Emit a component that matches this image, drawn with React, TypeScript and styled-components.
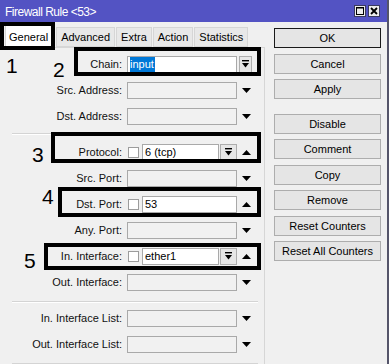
import React from "react";
import styled, { createGlobalStyle } from "styled-components";

const Global = createGlobalStyle`
  html, body { margin: 0; padding: 0; background: #f0f0f0; }
  body { font-family: "Liberation Sans", Arial, sans-serif; font-size: 11px; color: #000; }
  * { box-sizing: border-box; }
`;

const Window = styled.div`
  position: relative;
  width: 389px;
  height: 364px;
  overflow: hidden;
  background: #f0f0f0;
  display: flex;
  flex-direction: column;
  border-right: 2px solid #55556a;
`;

const TitleBar = styled.div`
  height: 22px;
  flex: none;
  background: #5353c3;
  color: #fff;
  display: flex;
  align-items: center;
  justify-content: space-between;
  padding: 0 7px 0 5px;
  font-size: 12px;
`;

const TitleText = styled.span`
  letter-spacing: -0.5px;
  padding-top: 1px;
`;

const TitleButtons = styled.div`
  display: flex;
  gap: 2px;
`;

const TitleBtn = styled.div`
  width: 12px;
  height: 12px;
  background: #ececec;
  border: 1px solid #3a3a60;
  display: flex;
  align-items: center;
  justify-content: center;
`;

const Body = styled.div`
  flex: 1;
  display: flex;
  min-height: 0;
`;

const LeftPane = styled.div`
  width: 265px;
  flex: none;
  display: flex;
  flex-direction: column;
`;

const TabStrip = styled.div`
  height: 25px;
  flex: none;
  display: flex;
  align-items: flex-end;
  padding-left: 5px;
`;

const Tab = styled.div<{ $active?: boolean }>`
  height: ${(p) => (p.$active ? 23 : 20)}px;
  padding: 0 ${(p) => (p.$active ? 3 : 4)}px;
  margin-bottom: ${(p) => (p.$active ? -1 : 0)}px;
  margin-right: ${(p) => (p.$active ? 4 : 1)}px;
  background: ${(p) => (p.$active ? "#ffffff" : "#e8e8e8")};
  border: 1px solid #d6d6d6;
  border-bottom: ${(p) => (p.$active ? "none" : "1px solid #d6d6d6")};
  display: flex;
  align-items: center;
  white-space: nowrap;
  position: relative;
  z-index: ${(p) => (p.$active ? 1 : 0)};
`;

const TabPanel = styled.div`
  flex: 1;
  border-top: 1px solid #d6d6d6;
  border-right: 1px solid #d6d6d6;
  display: flex;
  flex-direction: column;
`;

const Section = styled.div<{ $top: number; $bottom: number }>`
  padding: ${(p) => p.$top}px 0 ${(p) => p.$bottom}px;
  display: flex;
  flex-direction: column;
`;

const Separator = styled.div`
  margin: 0 6px 0 12px;
  border-top: 1px solid #d4d4d4;
  border-bottom: 1px solid #ffffff;
`;

const Row = styled.div`
  height: 26px;
  display: flex;
  align-items: center;
`;

const Label = styled.div`
  width: 122px;
  flex: none;
  text-align: right;
  white-space: nowrap;
  color: #111;
`;

const Field = styled.div`
  width: 110px;
  margin-left: 5px;
  flex: none;
  display: flex;
  align-items: center;
`;

const Check = styled.div`
  width: 11px;
  height: 11px;
  margin: 0 3px 0 1px;
  flex: none;
  background: #fff;
  border: 1px solid #9c9c9c;
`;

const TextBox = styled.div<{ $filled?: boolean }>`
  flex: 1;
  height: 17px;
  border: 1px solid #a9a9a9;
  background: ${(p) => (p.$filled ? "#ffffff" : "#f1f1f1")};
  padding-left: 2px;
  line-height: 15px;
  white-space: nowrap;
  overflow: hidden;
`;

const Selected = styled.span`
  background: #0078d7;
  color: #fff;
  padding: 0 1px 0 0;
  display: inline-block;
  height: 15px;
`;

const ComboBtn = styled.div<{ $w: number }>`
  width: ${(p) => p.$w}px;
  height: 17px;
  flex: none;
  margin-left: 1px;
  background: #e6e6e6;
  border: 1px solid #adadad;
  display: flex;
  align-items: center;
  justify-content: center;
`;

const Trail = styled.div`
  width: 16px;
  margin-left: 1px;
  flex: none;
  display: flex;
  align-items: center;
`;

const ArrowWrap = styled.div`
  margin-left: 4px;
  display: flex;
`;

const RightPane = styled.div`
  flex: 1;
  display: flex;
  flex-direction: column;
  padding: 6px 0 0 9px;
  gap: 5.5px;
`;

const Button = styled.div<{ $default?: boolean; $gapBefore?: boolean }>`
  width: 107px;
  height: 20px;
  flex: none;
  background: #e5e5e5;
  border: 1px solid ${(p) => (p.$default ? "#1a1a1a" : "#adadad")};
  display: flex;
  align-items: center;
  justify-content: center;
  white-space: nowrap;
  margin-top: ${(p) => (p.$gapBefore ? 9 : 0)}px;
`;

const Annot = styled.div<{ $x: number; $y: number; $w: number; $h: number }>`
  position: absolute;
  left: ${(p) => p.$x}px;
  top: ${(p) => p.$y}px;
  width: ${(p) => p.$w}px;
  height: ${(p) => p.$h}px;
  border: 4px solid #000;
  pointer-events: none;
  z-index: 5;
`;

const Num = styled.div<{ $x: number; $y: number }>`
  position: absolute;
  left: ${(p) => p.$x}px;
  top: ${(p) => p.$y}px;
  font-size: 21px;
  line-height: 21px;
  color: #000;
  z-index: 5;
`;

const ComboIcon = () => (
  <svg width="7" height="8" viewBox="0 0 7 8">
    <rect x="0" y="0" width="7" height="1.4" fill="#000" />
    <polygon points="0,3 7,3 3.5,7.5" fill="#000" />
  </svg>
);

const Tri = ({ up }: { up?: boolean }) => (
  <svg width="9" height="5" viewBox="0 0 9 5">
    <polygon points={up ? "0,5 9,5 4.5,0" : "0,0 9,0 4.5,5"} fill="#000" />
  </svg>
);

type RowDef = {
  label: string;
  value?: React.ReactNode;
  check?: boolean;
  combo?: "inside" | "outside";
  trail?: "up" | "down" | "none";
};

const FormRow = ({ label, value, check, combo, trail }: RowDef) => (
  <Row>
    <Label>{label}</Label>
    <Field>
      {check && <Check />}
      <TextBox $filled={value !== undefined}>{value}</TextBox>
      {combo === "inside" && (
        <ComboBtn $w={17}>
          <ComboIcon />
        </ComboBtn>
      )}
    </Field>
    <Trail>
      {combo === "outside" && (
        <ComboBtn $w={13}>
          <ComboIcon />
        </ComboBtn>
      )}
      {trail === "up" && (
        <ArrowWrap>
          <Tri up />
        </ArrowWrap>
      )}
      {trail === "down" && (
        <ArrowWrap>
          <Tri />
        </ArrowWrap>
      )}
    </Trail>
  </Row>
);

const buttons = [
  "OK",
  "Cancel",
  "Apply",
  "Disable",
  "Comment",
  "Copy",
  "Remove",
  "Reset Counters",
  "Reset All Counters",
];

export default function App() {
  return (
    <>
      <Global />
      <Window>
        <TitleBar>
          <TitleText>Firewall Rule &lt;53&gt;</TitleText>
          <TitleButtons>
            <TitleBtn>
              <svg width="8" height="8" viewBox="0 0 8 8">
                <rect x="0.5" y="0.5" width="7" height="7" fill="none" stroke="#000" />
                <rect x="0" y="0" width="8" height="1.5" fill="#000" />
              </svg>
            </TitleBtn>
            <TitleBtn>
              <svg width="8" height="8" viewBox="0 0 8 8">
                <path d="M1 1 L7 7 M7 1 L1 7" stroke="#000" strokeWidth="1.8" />
              </svg>
            </TitleBtn>
          </TitleButtons>
        </TitleBar>
        <Body>
          <LeftPane>
            <TabStrip>
              <Tab $active>General</Tab>
              <Tab>Advanced</Tab>
              <Tab>Extra</Tab>
              <Tab>Action</Tab>
              <Tab>Statistics</Tab>
            </TabStrip>
            <TabPanel>
              <Section $top={3} $bottom={4}>
                <FormRow
                  label="Chain:"
                  value={<Selected>input</Selected>}
                  combo="outside"
                />
                <FormRow label="Src. Address:" trail="down" />
                <FormRow label="Dst. Address:" trail="down" />
              </Section>
              <Separator />
              <Section $top={4} $bottom={6}>
                <FormRow label="Protocol:" check value="6 (tcp)" combo="inside" trail="up" />
                <FormRow label="Src. Port:" trail="down" />
                <FormRow label="Dst. Port:" check value="53" trail="up" />
                <FormRow label="Any. Port:" trail="down" />
                <FormRow label="In. Interface:" check value="ether1" combo="inside" trail="up" />
                <FormRow label="Out. Interface:" trail="down" />
              </Section>
              <Separator />
              <Section $top={2} $bottom={6}>
                <FormRow label="In. Interface List:" trail="down" />
                <FormRow label="Out. Interface List:" trail="down" />
              </Section>
              <Separator />
            </TabPanel>
          </LeftPane>
          <RightPane>
            {buttons.map((b) => (
              <Button key={b} $default={b === "OK"} $gapBefore={b === "Disable"}>
                {b}
              </Button>
            ))}
          </RightPane>
        </Body>

        <Annot $x={0} $y={22} $w={55} $h={28} />
        <Annot $x={74} $y={47} $w={187} $h={29} />
        <Annot $x={51} $y={132} $w={210} $h={31} />
        <Annot $x={58} $y={187} $w={203} $h={30} />
        <Annot $x={44} $y={243} $w={217} $h={27} />

        <Num $x={6} $y={55}>1</Num>
        <Num $x={53} $y={59}>2</Num>
        <Num $x={32} $y={144}>3</Num>
        <Num $x={42} $y={186}>4</Num>
        <Num $x={24} $y={250}>5</Num>
      </Window>
    </>
  );
}
